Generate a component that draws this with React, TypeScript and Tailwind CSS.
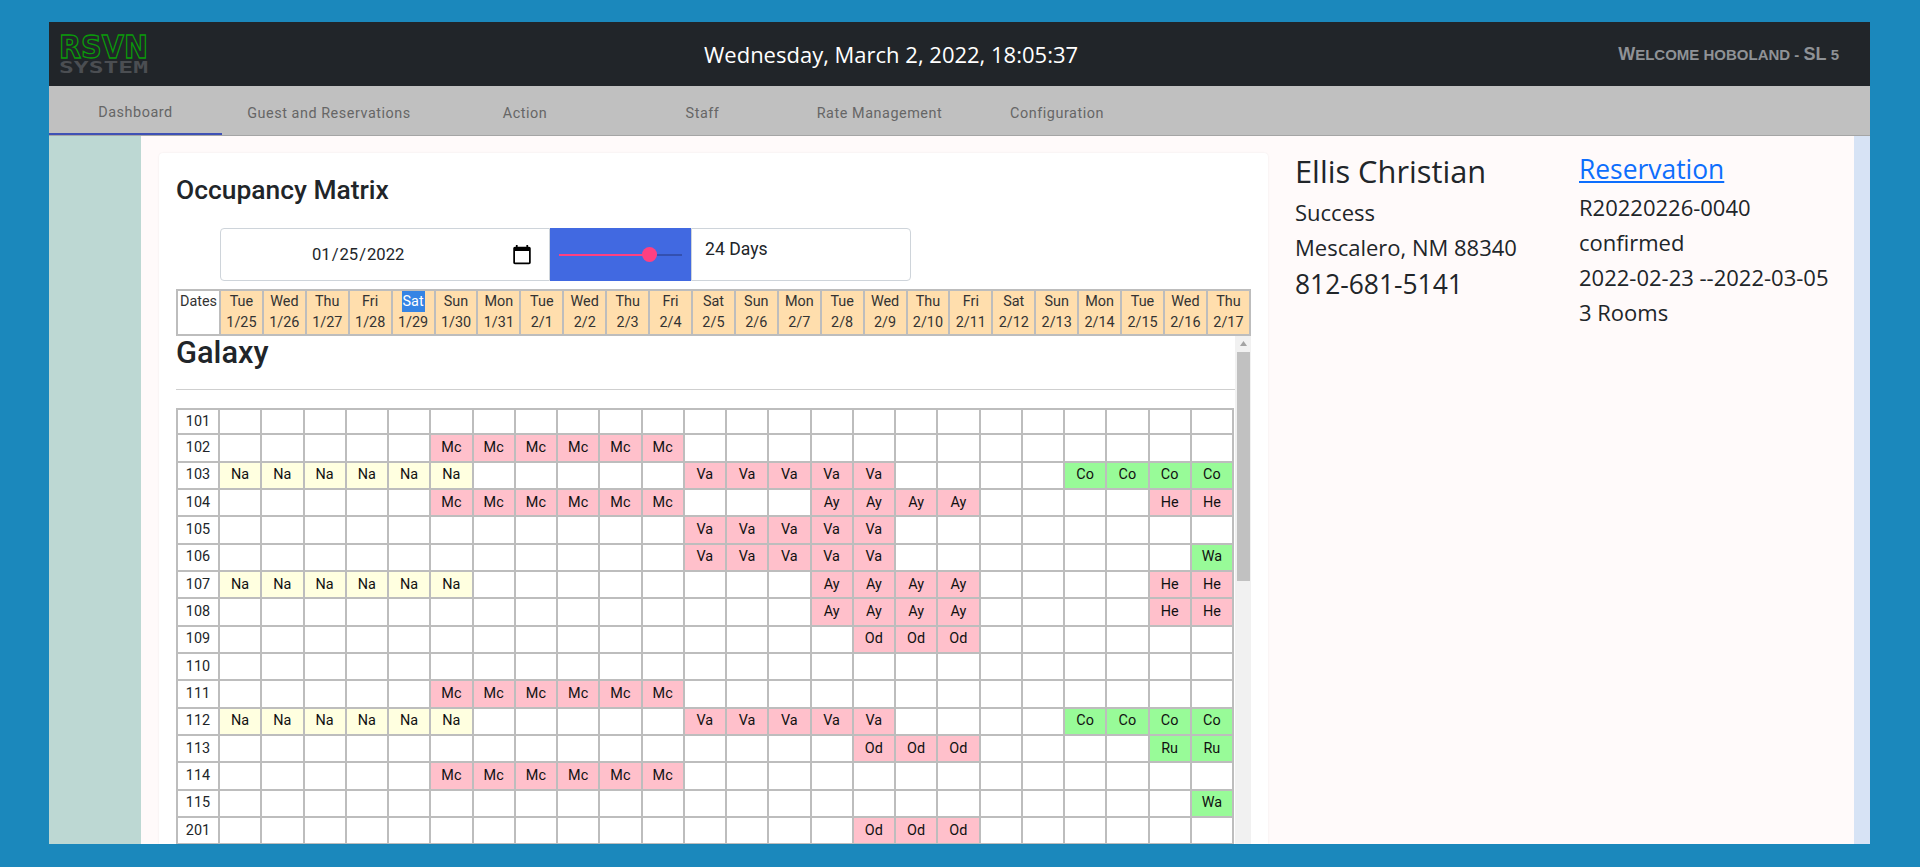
import React from "react";

const days = [
  ["Tue", "1/25"], ["Wed", "1/26"], ["Thu", "1/27"], ["Fri", "1/28"], ["Sat", "1/29"], ["Sun", "1/30"],
  ["Mon", "1/31"], ["Tue", "2/1"], ["Wed", "2/2"], ["Thu", "2/3"], ["Fri", "2/4"], ["Sat", "2/5"],
  ["Sun", "2/6"], ["Mon", "2/7"], ["Tue", "2/8"], ["Wed", "2/9"], ["Thu", "2/10"], ["Fri", "2/11"],
  ["Sat", "2/12"], ["Sun", "2/13"], ["Mon", "2/14"], ["Tue", "2/15"], ["Wed", "2/16"], ["Thu", "2/17"],
];

const tabs = [
  ["Dashboard", "w-[173px]"],
  ["Guest and Reservations", "w-[214px]"],
  ["Action", "w-[178px]"],
  ["Staff", "w-[177px]"],
  ["Rate Management", "w-[177px]"],
  ["Configuration", "w-[178px]"],
];

// guest, first column, last column
type Stay = [string, number, number];
const rooms: [string, Stay[]][] = [
  ["101", []],
  ["102", [["Mc", 5, 10]]],
  ["103", [["Na", 0, 5], ["Va", 11, 15], ["Co", 20, 23]]],
  ["104", [["Mc", 5, 10], ["Ay", 14, 17], ["He", 22, 23]]],
  ["105", [["Va", 11, 15]]],
  ["106", [["Va", 11, 15], ["Wa", 23, 23]]],
  ["107", [["Na", 0, 5], ["Ay", 14, 17], ["He", 22, 23]]],
  ["108", [["Ay", 14, 17], ["He", 22, 23]]],
  ["109", [["Od", 15, 17]]],
  ["110", []],
  ["111", [["Mc", 5, 10]]],
  ["112", [["Na", 0, 5], ["Va", 11, 15], ["Co", 20, 23]]],
  ["113", [["Od", 15, 17], ["Ru", 22, 23]]],
  ["114", [["Mc", 5, 10]]],
  ["115", [["Wa", 23, 23]]],
  ["201", [["Od", 15, 17]]],
];

const cellColor = (guest?: string) => {
  if (!guest) return "bg-white";
  if (guest === "Na") return "bg-[#ffffe0] text-[#111]";
  if (guest === "Co" || guest === "Ru" || guest === "Wa") return "bg-[#98fb98] text-[#111]";
  return "bg-[#ffc0cb] text-[#111]";
};

const Logo = () => (
  <svg width="92" height="52" viewBox="0 0 92 52" className="block">
    <text x="1" y="30" textLength="89" lengthAdjust="spacingAndGlyphs" fontFamily="'DejaVu Sans', sans-serif" fontWeight="700" fontSize="32" fill="none" stroke="#0a9a0a" strokeWidth="1.4">
      RSVN
    </text>
    <text x="1" y="45" textLength="89" lengthAdjust="spacingAndGlyphs" fontFamily="'DejaVu Sans Mono', monospace" fontWeight="700" fontSize="15" fill="#4b4e52">
      SYSTEM
    </text>
  </svg>
);

const App = () => {
  return (
    <div className="h-screen overflow-hidden bg-[#1b88bc] pt-[22px] pl-[49px] pr-[50px] font-['Roboto',sans-serif]">
      <div className="flex h-[822px] flex-col">
        {/* top bar */}
        <div className="flex h-[64px] shrink-0 items-center bg-[#212529]">
          <div className="ml-[9px] w-[92px]">
            <Logo />
          </div>
          <div className="ml-[554px] w-[373px] whitespace-nowrap text-center font-['Open_Sans',sans-serif] text-[22px] text-white">
            Wednesday, March 2, 2022, 18:05:37
          </div>
          <div className="ml-auto mr-[31px] whitespace-nowrap font-['Liberation_Sans',sans-serif] text-[15px] font-bold uppercase text-[#8f9296]">
            <span className="text-[18px]">W</span>elcome hoboland - <span className="text-[18px]">SL</span> 5
          </div>
        </div>

        {/* tabs */}
        <div className="flex h-[50px] shrink-0 border-b border-[#a5a5a5] bg-[#c0c0c0]">
          {tabs.map(([label, width], i) => (
            <div
              key={label}
              className={`${width} flex items-center justify-center pt-[6px] text-[14.4px] tracking-[0.55px] text-[#666] ${
                i === 0 ? "border-b-2 border-[#3f51b5]" : ""
              }`}
            >
              {label}
            </div>
          ))}
        </div>

        <div className="flex min-h-0 flex-1">
          <div className="w-[92px] shrink-0 bg-[#bdd8d3]" />

          <div className="flex min-w-0 flex-1 bg-[#fffafa]">
            {/* matrix card */}
            <div className="ml-[18px] mt-[17px] flex w-[1109px] shrink-0 flex-col rounded-t bg-white px-[17px] shadow-[0_0_2px_rgba(0,0,0,0.08)]">
              <h2 className="mt-[19px] text-[26.4px] font-medium leading-[36px] text-[#212529]">Occupancy Matrix</h2>

              <div className="ml-[44px] mt-[20px] flex h-[53px] w-[691px] shrink-0 text-[17.6px] text-[#212529]">
                <input
                  type="date"
                  defaultValue="2022-01-25"
                  className="h-full w-[330px] rounded-l border border-[#ced4da] bg-white pl-[90px] pr-[16px] pt-[1px] text-[16.6px] [&::-webkit-calendar-picker-indicator]:h-[22px] [&::-webkit-calendar-picker-indicator]:w-[22px] [&::-webkit-calendar-picker-indicator]:p-0"
                />
                <div className="flex w-[141px] items-center bg-[#4169e1] px-[9px]">
                  <div className="h-[2px] w-[90px] bg-[#ff4081]" />
                  <div className="-ml-[7px] h-[15px] w-[15px] shrink-0 rounded-full bg-[#ff4081]" />
                  <div className="h-[2px] flex-1 bg-[#3350b0]" />
                </div>
                <div className="w-[220px] rounded-r border border-[#ced4da] pl-[13px] pt-[7px]">24 Days</div>
              </div>

              {/* date header */}
              <table className="mt-[8px] w-[1075px] shrink-0 table-fixed border-collapse text-[14.4px] leading-[21px]">
                <tbody>
                  <tr className="h-[45px]">
                    <td className="w-[43px] border-2 border-[#bdbdbd] bg-white p-0 text-center align-top leading-[22px] text-[#333]">Dates</td>
                    {days.map(([day, date], i) => (
                      <td key={date} className="border-2 border-[#bdbdbd] bg-[#ffdead] p-0 text-center align-top text-[#333]">
                        <div className={i === 4 ? "mx-auto w-fit bg-[#3584e4] px-[1px] text-white" : ""}>{day}</div>
                        <div>{date}</div>
                      </td>
                    ))}
                  </tr>
                </tbody>
              </table>

              <div className="flex min-h-0 flex-1">
                <div className="w-[1059px] shrink-0 overflow-hidden">
                  <div className="text-[30.8px] font-medium leading-[34px] text-[#212529]">Galaxy</div>
                  <hr className="mt-[19px] border-[#cfcfcf]" />
                  <table className="mt-[18px] w-[1058px] table-fixed border-collapse text-[14.4px] text-[#212529]">
                    <tbody>
                      {rooms.map(([room, stays], r) => (
                        <tr key={room} className={r === 0 ? "h-[25px]" : r % 3 === 0 ? "h-[27px]" : "h-[27.5px]"}>
                          <td className="w-[42px] border-2 border-[#bdbdbd] bg-white p-0 text-center">{room}</td>
                          {days.map(([, date], c) => {
                            const stay = stays.find(([, a, b]) => c >= a && c <= b);
                            return (
                              <td key={date} className={`border-2 border-[#bdbdbd] p-0 text-center ${cellColor(stay?.[0])}`}>
                                {stay?.[0]}
                              </td>
                            );
                          })}
                        </tr>
                      ))}
                    </tbody>
                  </table>
                </div>

                {/* scrollbar */}
                <div className="flex w-[16px] shrink-0 flex-col items-center bg-[#f1f1f1]">
                  <svg width="9" height="9" viewBox="0 0 9 9" className="mt-[3px]">
                    <path d="M4.5 2 L8 7 L1 7 Z" fill="#a3a3a3" />
                  </svg>
                  <div className="mt-[4px] h-[229px] w-[13px] bg-[#c1c1c1]" />
                </div>
              </div>
            </div>

            {/* guest details */}
            <div className="ml-[27px] w-[284px] shrink-0 pt-[14px] font-['Open_Sans',sans-serif] text-[22px] leading-[35px] text-[#212529]">
              <div className="mb-[3px] text-[30.8px] leading-[42px]">Ellis Christian</div>
              <div>Success</div>
              <div>Mescalero, NM 88340</div>
              <div className="text-[26.4px] leading-[38px]">812-681-5141</div>
            </div>
            <div className="min-w-0 flex-1 pt-[12px] font-['Open_Sans',sans-serif] text-[22px] leading-[35px] text-[#212529]">
              <a href="#" className="text-[26.4px] leading-[42px] text-[#0d6efd] underline">Reservation</a>
              <div>R20220226-0040</div>
              <div>confirmed</div>
              <div className="whitespace-nowrap">2022-02-23 --2022-03-05</div>
              <div>3 Rooms</div>
            </div>
          </div>

          <div className="w-[16px] shrink-0 bg-[#d7e3f5]" />
        </div>
      </div>
    </div>
  );
};

export default App;
